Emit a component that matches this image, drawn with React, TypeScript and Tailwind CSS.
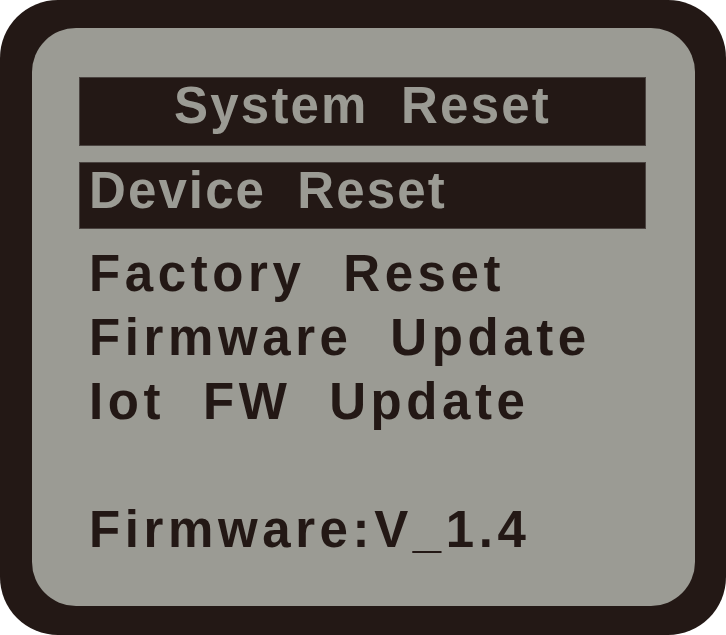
const items = ["Factory Reset", "Firmware Update", "Iot FW Update", "", "Firmware:V_1.4"];

export default function App() {
  return (
    <div className="w-[726px] h-[635px] bg-white">
      <div className="w-[726px] h-[635px] rounded-[58px] bg-[#231815] pt-[28px] pl-[32px]">
        <div
          className="w-[663px] h-[578px] rounded-[44px] bg-[#9b9b94] pt-[49px] pl-[47px] font-bold text-[51px]"
          style={{ fontFamily: '"Liberation Sans", Arial, sans-serif' }}
        >
          {/* title */}
          <div className="w-[567px] h-[69px] bg-[#231815] border border-[#4a4340] text-[#9b9b94] text-center leading-[55px] tracking-[2.2px] [word-spacing:16px] whitespace-pre">
            System Reset
          </div>

          {/* selected row */}
          <div className="mt-[16px] w-[567px] h-[67px] bg-[#231815] border border-[#4a4340] text-[#9b9b94] pl-[9px] leading-[55px] tracking-[2.1px] [word-spacing:15px] whitespace-pre">
            Device Reset
          </div>

          <div className="mt-[13px] pl-[10px] text-[#231815] tracking-[4.6px] [word-spacing:19px]">
            {items.map((t, i) => (
              <div key={i} className="h-[64px] leading-[64px] whitespace-pre">
                {t}
              </div>
            ))}
          </div>
        </div>
      </div>
    </div>
  );
}
